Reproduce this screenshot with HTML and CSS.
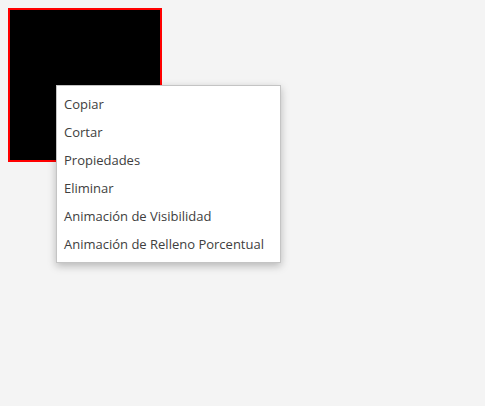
FILE: index.html
```html
<!DOCTYPE html>
<html>
<head>
<meta charset="utf-8">
<link rel="stylesheet" href="styles.css">
</head>
<body>
<div class="canvas">
  <div class="shape"></div>
  <ul class="menu">
    <li class="item">Copiar</li>
    <li class="item">Cortar</li>
    <li class="item">Propiedades</li>
    <li class="item">Eliminar</li>
    <li class="item">Animación de Visibilidad</li>
    <li class="item">Animación de Relleno Porcentual</li>
  </ul>
</div>
</body>
</html>
```
FILE: styles.css
```css
html, body {
  margin: 0;
  padding: 0;
  background: #f4f4f4;
  width: 485px;
  height: 406px;
  overflow: hidden;
}
body {
  font-family: "Open Sans", sans-serif;
}
.canvas {
  position: relative;
  padding: 8px;
}
.shape {
  width: 150px;
  height: 150px;
  background: #000;
  border: 2px solid #ff0000;
}
.menu {
  position: absolute;
  left: 56px;
  top: 85px;
  width: 223px;
  margin: 0;
  padding: 4px 0;
  list-style: none;
  background: #fff;
  border: 1px solid #c4c4c4;
  box-shadow: 0 3px 8px rgba(0, 0, 0, 0.25);
}
.item {
  height: 28px;
  line-height: 28px;
  padding: 0 7px;
  font-size: 13px;
  color: #404040;
  white-space: nowrap;
}
```
